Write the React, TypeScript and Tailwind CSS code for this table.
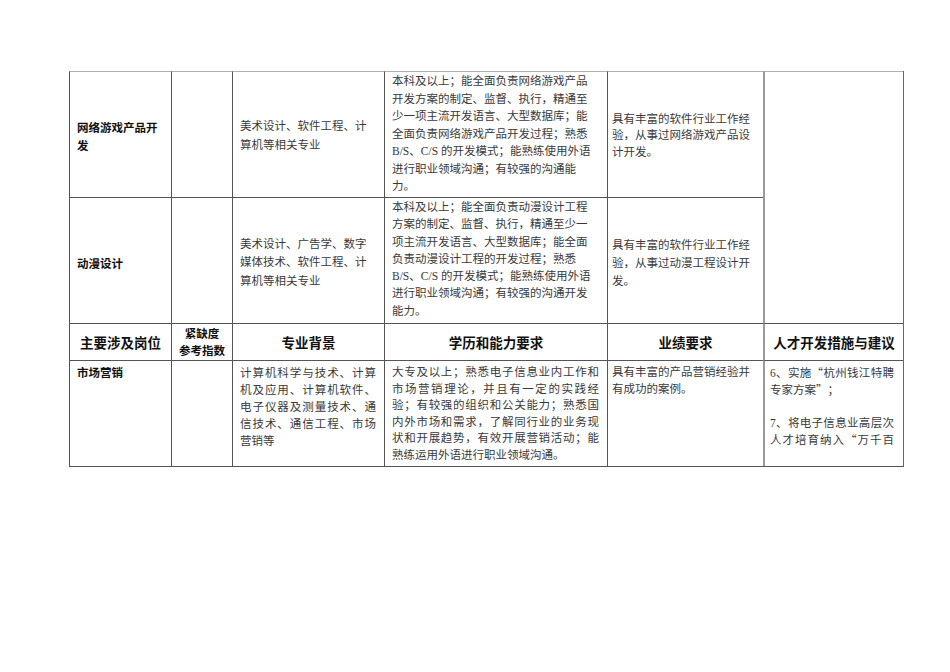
import React from "react";

const serif = "font-['Liberation_Serif','Noto_Sans_CJK_SC',serif]";
const sans = "font-['Noto_Sans_CJK_SC',sans-serif]";

const Lines = ({ lines, cls = "" }: { lines: string[]; cls?: string }) => (
  <div className={cls}>
    {lines.map((l, i) => (
      <div key={i} className="whitespace-nowrap">
        {l === "" ? "\u00a0" : l}
      </div>
    ))}
  </div>
);

const JLines = ({ lines, last }: { lines: string[]; last?: boolean }) => (
  <div>
    {lines.map((l, i) => {
      const isLast = last && i === lines.length - 1;
      return (
        <div
          key={i}
          className={
            "whitespace-nowrap " +
            (isLast || l === "" ? "" : "text-justify [text-align-last:justify]")
          }
        >
          {l === "" ? "\u00a0" : l}
        </div>
      );
    })}
  </div>
);

const Q = ({ c }: { c: string }) => (
  <span className="font-['Noto_Sans_CJK_SC',sans-serif] inline-block w-[11.5px] text-center">{c}</span>
);

const cell = "border-l border-t border-[#555]";
const topCell = "border-l border-t border-l-[#555] border-t-[#b0b0b0]";
const body = `${serif} text-[11.5px] text-[#3a3a3a]`;
const label = `${sans} font-bold text-[11.5px] text-[#111]`;
const head = `${sans} font-bold text-[13.5px] text-[#111]`;

export default function App() {
  return (
    <div className="min-h-[672px] w-[950px] bg-white">
      <div className="pl-[69px] pt-[71px]">
        <div className="grid w-[835px] grid-cols-[102px_61px_152px_223px_156px_140px] grid-rows-[126px_126px_37px_106px] border-b border-r border-b-[#555] border-r-[#666]">
          {/* Row 1 */}
          <div className={`${topCell} flex items-center pl-[7px] pt-[2px] ${label} leading-[18px]`}>
            <div>
              网络游戏产品开
              <br />发
            </div>
          </div>
          <div className={topCell}></div>
          <div className={`${topCell} flex items-center pl-[7px] pt-[2px] ${body} leading-[19px]`}>
            <Lines lines={["美术设计、软件工程、计", "算机等相关专业"]} />
          </div>
          <div className={`${topCell} pl-[7px] pt-[1px] ${body} leading-[17.5px]`}>
            <Lines
              lines={[
                "本科及以上；能全面负责网络游戏产品",
                "开发方案的制定、监督、执行，精通至",
                "少一项主流开发语言、大型数据库；能",
                "全面负责网络游戏产品开发过程；熟悉",
                "B/S、C/S 的开发模式；能熟练使用外语",
                "进行职业领域沟通；有较强的沟通能",
                "力。",
              ]}
            />
          </div>
          <div className={`${topCell} flex items-center pl-[4px] pt-[2px] ${body} leading-[16.5px]`}>
            <Lines lines={["具有丰富的软件行业工作经", "验，从事过网络游戏产品设", "计开发。"]} />
          </div>
          <div className="row-span-2 border-l-2 border-t border-l-[#9a9a9a] border-t-[#b0b0b0]"></div>

          {/* Row 2 */}
          <div className={`${cell} flex items-center pl-[7px] pt-[4px] ${label} leading-[18px]`}>
            动漫设计
          </div>
          <div className={cell}></div>
          <div className={`${cell} flex items-center pl-[7px] pt-[4px] ${body} leading-[18.5px]`}>
            <Lines lines={["美术设计、广告学、数字", "媒体技术、软件工程、计", "算机等相关专业"]} />
          </div>
          <div className={`${cell} pl-[7px] pt-[1px] ${body} leading-[17.3px]`}>
            <Lines
              lines={[
                "本科及以上；能全面负责动漫设计工程",
                "方案的制定、监督、执行，精通至少一",
                "项主流开发语言、大型数据库；能全面",
                "负责动漫设计工程的开发过程；熟悉",
                "B/S、C/S 的开发模式；能熟练使用外语",
                "进行职业领域沟通；有较强的沟通开发",
                "能力。",
              ]}
            />
          </div>
          <div className={`${cell} flex items-center pl-[4px] pt-[4px] ${body} leading-[18px]`}>
            <Lines lines={["具有丰富的软件行业工作经", "验，从事过动漫工程设计开", "发。"]} />
          </div>

          {/* Header row */}
          <div className={`${cell} flex items-center justify-center ${head}`}>主要涉及岗位</div>
          <div className={`${cell} flex flex-col items-center justify-center ${sans} font-bold text-[11.5px] leading-[17px] text-[#111]`}>
            <div>紧缺度</div>
            <div>参考指数</div>
          </div>
          <div className={`${cell} flex items-center justify-center ${head}`}>专业背景</div>
          <div className={`${cell} flex items-center justify-center ${head}`}>学历和能力要求</div>
          <div className={`${cell} flex items-center justify-center ${head}`}>业绩要求</div>
          <div className={`border-l-2 border-t border-l-[#9a9a9a] border-t-[#555] flex items-center justify-center ${head}`}>
            人才开发措施与建议
          </div>

          {/* Row 3 */}
          <div className={`${cell} pl-[7px] pt-[3px] ${label} leading-[16.6px]`}>市场营销</div>
          <div className={cell}></div>
          <div className={`${cell} pl-[7px] pr-[8px] pt-[4px] ${body} leading-[17px]`}>
            <JLines
              last
              lines={["计算机科学与技术、计算", "机及应用、计算机软件、", "电子仪器及测量技术、通", "信技术、通信工程、市场", "营销等"]}
            />
          </div>
          <div className={`${cell} pl-[7px] pr-[8px] pt-[3px] ${body} leading-[16.6px]`}>
            <JLines
              last
              lines={[
                "大专及以上；熟悉电子信息业内工作和",
                "市场营销理论，并且有一定的实践经",
                "验；有较强的组织和公关能力；熟悉国",
                "内外市场和需求，了解同行业的业务现",
                "状和开展趋势，有效开展营销活动；能",
                "熟练运用外语进行职业领域沟通。",
              ]}
            />
          </div>
          <div className={`${cell} pl-[4px] pt-[3px] ${body} leading-[16.6px]`}>
            <Lines lines={["具有丰富的产品营销经验并", "有成功的案例。"]} />
          </div>
          <div className={`border-l-2 border-t border-l-[#9a9a9a] border-t-[#555] pl-[5px] pr-[9px] pt-[3px] ${body} leading-[16.3px]`}>
            <div className="whitespace-nowrap text-justify [text-align-last:justify]">
              6、实施<Q c="“" />杭州钱江特聘
            </div>
            <div className="whitespace-nowrap">
              专家方案<Q c="”" />；
            </div>
            <div>&nbsp;</div>
            <div className="whitespace-nowrap text-justify [text-align-last:justify]">7、将电子信息业高层次</div>
            <div className="whitespace-nowrap text-justify [text-align-last:justify]">
              人才培育纳入<Q c="“" />万千百
            </div>
          </div>
        </div>
      </div>
    </div>
  );
}
